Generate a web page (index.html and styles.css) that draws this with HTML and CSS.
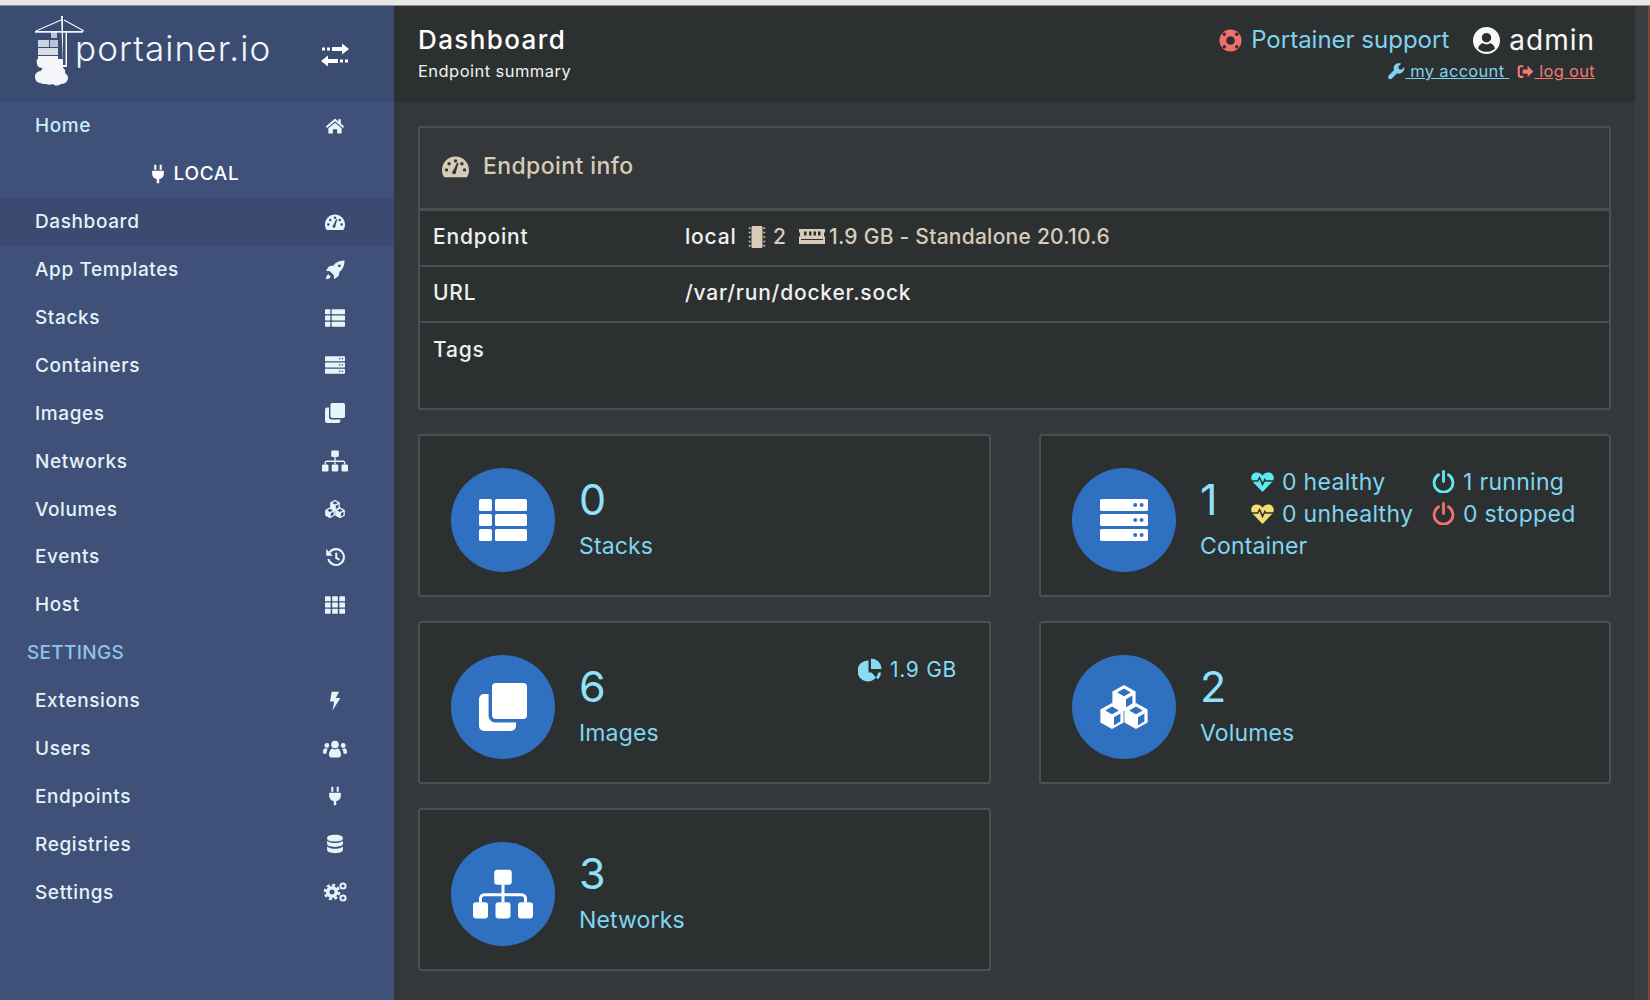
FILE: index.html
```html
<!DOCTYPE html>
<html>

<head>
    <title>Portainer</title>
    <link rel="stylesheet" href="styles.css">
</head>

<body>
    <!-- icon sprite -->
    <svg class="sprite" xmlns="http://www.w3.org/2000/svg">
        <symbol id="i-exchange" viewBox="0 0 28 24"><path d="M1 4.5h3v3H1zM6 4.5h3v3H6zM11 4h10V.5L28 6l-7 5.5V8H11zM27 16.5h-3v3h3zM22 16.5h-3v3h3zM17 16H7v-3.5L0 18l7 5.5V20h10z"/></symbol>
        <symbol id="i-home" viewBox="0 0 24 24"><path d="M12 3L1 12.5l1.5 1.8L12 6.2l9.5 8.1 1.5-1.8L19 9V4h-3v2.5zM12 8l-8 6.7V21h5.5v-5h5v5H20v-6.3z"/></symbol>
        <symbol id="i-plug" viewBox="0 0 24 24"><path d="M7.5 1H10v6H7.5zM14 1h2.5v6H14zM5 8h14v4c0 3-2 5.5-5.5 6v5h-3v-5C7 17.5 5 15 5 12z"/></symbol>
        <symbol id="i-gauge" viewBox="0 0 24 24"><path fill-rule="evenodd" d="M12 3C5.4 3 0 8.4 0 15c0 2.3.6 4.3 1.7 6 .2.3.5.5.9.5h18.8c.4 0 .7-.2.9-.5 1.1-1.7 1.7-3.7 1.7-6 0-6.6-5.4-12-12-12zM2.5 15a1.5 1.5 0 1 0 3 0 1.5 1.5 0 1 0-3 0zM4.8 9.5a1.5 1.5 0 1 0 3 0 1.5 1.5 0 1 0-3 0zM10.5 7a1.5 1.5 0 1 0 3 0 1.5 1.5 0 1 0-3 0zM18.5 15a1.5 1.5 0 1 0 3 0 1.5 1.5 0 1 0-3 0zM16.2 9.5a1.5 1.5 0 1 0 3 0 1.5 1.5 0 1 0-3 0zM10 15.5l3.5-7 1.2.5-2.2 7.5a1.8 1.8 0 1 1-2.5-1z"/></symbol>
        <symbol id="i-rocket" viewBox="0 0 24 24"><path fill-rule="evenodd" d="M23.5.5c-6 0-10.500 2-13.500 6L5 7.500 1 13l5 .5 4.500 4.500.5 5 5.500-4 1-5c4-3 6-7.500 6-13.500zM15.500 7a1.700 1.700 0 1 0 3.400 0 1.700 1.700 0 1 0-3.400 0z"/><path d="M4 17c-2 1-3 4-3 6 2 0 5-1 6-3z"/></symbol>
        <symbol id="i-list" viewBox="0 0 24 21"><rect x="0" y="0" width="6.500" height="6" rx=".8"/><rect x="8" y="0" width="16" height="6" rx=".8"/><rect x="0" y="7.500" width="6.500" height="6" rx=".8"/><rect x="8" y="7.500" width="16" height="6" rx=".8"/><rect x="0" y="15" width="6.500" height="6" rx=".8"/><rect x="8" y="15" width="16" height="6" rx=".8"/></symbol>
        <symbol id="i-server" viewBox="0 0 24 21"><path fill-rule="evenodd" d="M.8 0h22.400c.4 0 .8.4.8.8v4.400c0 .4-.4.8-.8.8H.8C.4 6 0 5.600 0 5.200V.8C0 .4.4 0 .8 0zM16.600 3a1 1 0 1 0 2 0 1 1 0 1 0-2 0zM19.800 3a1 1 0 1 0 2 0 1 1 0 1 0-2 0zM.8 7.500h22.400c.4 0 .8.4.8.8v4.400c0 .4-.4.8-.8.8H.8c-.4 0-.8-.4-.8-.8V8.300c0-.4.4-.8.8-.8zM16.600 10.500a1 1 0 1 0 2 0 1 1 0 1 0-2 0zM19.800 10.500a1 1 0 1 0 2 0 1 1 0 1 0-2 0zM.8 15h22.400c.4 0 .8.4.8.8v4.400c0 .4-.4.8-.8.8H.8c-.4 0-.8-.4-.8-.8v-4.400c0-.4.4-.8.8-.8zM16.600 18a1 1 0 1 0 2 0 1 1 0 1 0-2 0zM19.800 18a1 1 0 1 0 2 0 1 1 0 1 0-2 0z"/></symbol>
        <symbol id="i-clone" viewBox="0 0 24 24"><rect x="6.500" y="0" width="17.500" height="18" rx="2"/><path d="M4.800 5.500H2.500A2.500 2.500 0 0 0 0 8v13.500A2.500 2.500 0 0 0 2.500 24H16a2.500 2.500 0 0 0 2.500-2.500v-1.800H8a3.200 3.200 0 0 1-3.200-3.200z"/></symbol>
        <symbol id="i-sitemap" viewBox="0 0 24 19.500"><rect x="8.500" y="0" width="7" height="6" rx="1.200"/><rect x="0" y="13" width="6" height="6.500" rx="1.200"/><rect x="9" y="13" width="6" height="6.500" rx="1.200"/><rect x="18" y="13" width="6" height="6.500" rx="1.200"/><path d="M12 6v7M3 13v-1.500A1.500 1.500 0 0 1 4.500 10h15a1.500 1.500 0 0 1 1.500 1.500V13" fill="none" stroke="currentColor" stroke-width="1.200"/></symbol>
        <symbol id="i-cubes" viewBox="0 0 24 22"><path fill-rule="evenodd" d="M12 0l5.800 3.200v6.600L12 13 6.200 9.800V3.200zM12 1.800L8.600 3.700 12 5.600l3.400-1.900zM13 7.100v4l3.200-1.800v-4z"/><path fill-rule="evenodd" d="M6 9l5.800 3.200v6.600L6 22 .2 18.800v-6.600zM6 10.800l-3.400 1.900L6 14.600l3.400-1.900zM7 16.100v4l3.200-1.800v-4z"/><path fill-rule="evenodd" d="M18 9l5.800 3.200v6.600L18 22l-5.800-3.200v-6.600zM18 10.800l-3.400 1.900 3.400 1.900 3.400-1.900zM19 16.100v4l3.200-1.800v-4z"/></symbol>
        <symbol id="i-history" viewBox="0 0 24 24"><path d="M5.500 6.500A9.500 9.500 0 1 1 4 14.500M13.500 7v6l4 2.500" fill="none" stroke="currentColor" stroke-width="2.500"/><path d="M1.500 2.500v8h8z"/></symbol>
        <symbol id="i-grid" viewBox="0 0 24 21"><rect x="0" y="0" width="6.800" height="6" rx=".6"/><rect x="8.600" y="0" width="6.800" height="6" rx=".6"/><rect x="17.200" y="0" width="6.800" height="6" rx=".6"/><rect x="0" y="7.500" width="6.800" height="6" rx=".6"/><rect x="8.600" y="7.500" width="6.800" height="6" rx=".6"/><rect x="17.200" y="7.500" width="6.800" height="6" rx=".6"/><rect x="0" y="15" width="6.800" height="6" rx=".6"/><rect x="8.600" y="15" width="6.800" height="6" rx=".6"/><rect x="17.200" y="15" width="6.800" height="6" rx=".6"/></symbol>
        <symbol id="i-bolt" viewBox="0 0 24 24"><path d="M8 1h9l-4 7.500h5.500L9 23.500l2-11H6z"/></symbol>
        <symbol id="i-users" viewBox="0 0 24 24"><circle cx="12" cy="7.500" r="3.800"/><path d="M6 18c0-4 2-6.500 3.500-6.500 1 .6 1.700.9 2.500.9s1.500-.3 2.500-.9C16 11.500 18 14 18 18c0 1.300-1 2.500-2.500 2.500h-7C7 20.500 6 19.300 6 18z"/><circle cx="3.800" cy="8.500" r="2.400"/><circle cx="20.200" cy="8.500" r="2.400"/><path d="M0 15c0-2.500 1-3.800 2.500-3.800.6.500 1.600.8 2.400.6-.8 1.200-1.400 3-1.500 5H1c-.6 0-1-.5-1-1.800zM24 15c0-2.500-1-3.800-2.500-3.800-.6.500-1.600.8-2.400.6.800 1.200 1.400 3 1.500 5H23c.6 0 1-.5 1-1.800z"/></symbol>
        <symbol id="i-database" viewBox="0 0 24 24"><path d="M12 1C6 1 2.500 2.500 2.500 5S6 9 12 9s9.500-1.500 9.500-4S18 1 12 1zM2.500 8v3.500c0 2.500 3.500 4 9.500 4s9.500-1.500 9.500-4V8c-2 2-6 2.800-9.500 2.800S4.500 10 2.500 8zM2.500 15v4c0 2.500 3.500 4 9.500 4s9.500-1.500 9.500-4v-4c-2 2-6 2.800-9.500 2.800S4.500 17 2.500 15z"/></symbol>
        <symbol id="i-cogs" viewBox="0 0 24 24"><circle cx="9" cy="12" r="7" fill="none" stroke="currentColor" stroke-width="2.600" stroke-dasharray="3 2.500"/><circle cx="9" cy="12" r="4.300" fill="none" stroke="currentColor" stroke-width="3.600"/><circle cx="20" cy="6" r="2.600" fill="none" stroke="currentColor" stroke-width="2"/><circle cx="20" cy="18" r="2.600" fill="none" stroke="currentColor" stroke-width="2"/></symbol>
        <symbol id="i-lifering" viewBox="0 0 24 24"><circle cx="12" cy="12" r="11.500" class="ring-a"/><circle cx="12" cy="12" r="4.500" class="ring-b"/><circle cx="5.500" cy="5.500" r="1.800" class="ring-b"/><circle cx="18.500" cy="5.500" r="1.800" class="ring-b"/><circle cx="5.500" cy="18.500" r="1.800" class="ring-b"/><circle cx="18.500" cy="18.500" r="1.800" class="ring-b"/></symbol>
        <symbol id="i-user" viewBox="0 0 24 24"><path fill-rule="evenodd" d="M12 0a12 12 0 1 0 0 24 12 12 0 1 0 0-24zM7.800 9.500a4.200 4.200 0 1 0 8.400 0 4.200 4.200 0 1 0-8.400 0zM4.500 19c1-3.500 3.500-4.500 4.500-4.500.8.600 1.800 1 3 1s2.200-.4 3-1c1 0 3.500 1 4.500 4.500-2 2-4.500 3-7.500 3s-5.500-1-7.500-3z"/></symbol>
        <symbol id="i-wrench" viewBox="0 0 24 24"><path d="M23 5.500l-4 4-3.500-1-1-3.500 4-4C15.500 0 12 .5 10 2.500c-2 2-2.500 5-1.500 7.500L1 17.500c-1.200 1.200-1.200 3.200 0 4.500s3.300 1.200 4.500 0L13 14.500c2.500 1 5.500.5 7.500-1.500 2-2 3-4.500 2.500-7.500z"/></symbol>
        <symbol id="i-signout" viewBox="0 0 24 24"><path d="M9 3H5a4 4 0 0 0-4 4v10a4 4 0 0 0 4 4h4v-3H5a1 1 0 0 1-1-1V7a1 1 0 0 1 1-1h4zM8 9h7V4l8 8-8 8v-5H8z"/></symbol>
        <symbol id="i-heart" viewBox="0 0 24 24"><path d="M12 23L2 12.500C-1.500 8.500.5 2.500 6 2.500c3 0 5 1.500 6 3.500 1-2 3-3.500 6-3.500 5.500 0 7.500 6 4 10z"/><path d="M0 11.500h7l2-3.500 3 7 2.500-5 1 1.500H24" class="pulse"/></symbol>
        <symbol id="i-power" viewBox="0 0 24 24"><path d="M6.800 5A9.800 9.800 0 1 0 17.200 5M12 1.500v10.500" fill="none" stroke="currentColor" stroke-width="3" stroke-linecap="round"/></symbol>
        <symbol id="i-pie" viewBox="0 0 24 24"><path d="M10.500 2.500a10.500 10.500 0 1 0 9.800 12H10.500zM13 .5A10.500 10.500 0 0 1 23.500 11H13zM13.500 14.500h9.500a10.500 10.500 0 0 1-3 7z"/></symbol>
        <symbol id="i-chip" viewBox="0 0 24 24"><rect x="6" y="0" width="12" height="24" rx="1.500"/><path d="M3 2.500h2M3 7h2M3 12h2M3 17h2M3 21.500h2M19 2.500h2M19 7h2M19 12h2M19 17h2M19 21.500h2" stroke="currentColor" stroke-width="1.600" fill="none"/></symbol>
        <symbol id="i-memory" viewBox="0 0 26 15"><path fill-rule="evenodd" d="M0 0h26v3.500h-1v4h1V15H0V7.500h1v-4H0zM5 2.500h2.500v4H5zM10 2.500h2.500v4H10zM14.500 2.500H17v4h-2.500zM19 2.500h2.500v4H19zM2 10v1h22v-1z"/></symbol>
    </svg>

    <div class="browser-bar"></div>

    <div class="window">
        <aside class="sidebar">
            <div class="brand">
                <div class="logo">
                    <svg class="crane" viewBox="0 0 54 70" xmlns="http://www.w3.org/2000/svg">
                        <path d="M1 15h48v1.800H1z"/>
                        <path d="M27 0h2v51h4V15h-1.500v34H29z"/>
                        <path d="M2 15L27 4M50 15L30 4" class="crane-line"/>
                        <rect x="4" y="24" width="11" height="7" opacity=".8"/>
                        <rect x="16" y="24" width="8" height="7" opacity=".7"/>
                        <rect x="4" y="32" width="20" height="7" opacity=".85"/>
                        <rect x="4" y="40" width="20" height="6"/>
                        <rect x="17" y="16" width="6" height="6" opacity=".7"/>
                        <path d="M3 43h26v9H8c-4 0-6-3-5-9z"/>
                        <path d="M12 68c-6 0-11-2-11-7 0-4 3-6 6-6 1-4 6-6 10-4 2-2 7-3 10 0 3 1 5 3 4 6 3 2 4 5 2 8-1 2-3 3-6 3-3 2-6 2-8 0-2 1-5 1-7 0z"/>
                    </svg>
                    <span class="logo-text">portainer.io</span>
                </div>
                <svg class="icon-toggle"><use href="#i-exchange"/></svg>
            </div>
            <nav class="nav">
                <a class="nav-row home">Home <svg class="icon"><use href="#i-home"/></svg></a>
                <div class="nav-endpoint"><svg class="icon"><use href="#i-plug"/></svg> LOCAL</div>
                <a class="nav-row active">Dashboard <svg class="icon"><use href="#i-gauge"/></svg></a>
                <a class="nav-row">App Templates <svg class="icon"><use href="#i-rocket"/></svg></a>
                <a class="nav-row">Stacks <svg class="icon"><use href="#i-list"/></svg></a>
                <a class="nav-row">Containers <svg class="icon"><use href="#i-server"/></svg></a>
                <a class="nav-row">Images <svg class="icon"><use href="#i-clone"/></svg></a>
                <a class="nav-row">Networks <svg class="icon wide"><use href="#i-sitemap"/></svg></a>
                <a class="nav-row">Volumes <svg class="icon"><use href="#i-cubes"/></svg></a>
                <a class="nav-row">Events <svg class="icon"><use href="#i-history"/></svg></a>
                <a class="nav-row">Host <svg class="icon"><use href="#i-grid"/></svg></a>
                <div class="nav-title">SETTINGS</div>
                <a class="nav-row">Extensions <svg class="icon"><use href="#i-bolt"/></svg></a>
                <a class="nav-row">Users <svg class="icon wide"><use href="#i-users"/></svg></a>
                <a class="nav-row">Endpoints <svg class="icon"><use href="#i-plug"/></svg></a>
                <a class="nav-row">Registries <svg class="icon"><use href="#i-database"/></svg></a>
                <a class="nav-row">Settings <svg class="icon wide"><use href="#i-cogs"/></svg></a>
            </nav>
        </aside>

        <div class="main">
            <header class="topbar">
                <div>
                    <div class="page-title">Dashboard</div>
                    <div class="page-sub">Endpoint summary</div>
                </div>
                <div class="account">
                    <div class="account-top">
                        <a class="support"><svg class="icon-support"><use href="#i-lifering"/></svg>Portainer support</a>
                        <span class="username"><svg class="icon-user"><use href="#i-user"/></svg>admin</span>
                    </div>
                    <div class="account-links">
                        <a class="link-blue"><svg class="icon-small"><use href="#i-wrench"/></svg><u>&nbsp;my account&nbsp;</u></a>
                        <a class="link-red"><svg class="icon-small"><use href="#i-signout"/></svg><u>&nbsp;log out</u></a>
                    </div>
                </div>
            </header>

            <div class="content">
                <section class="panel">
                    <div class="panel-head"><svg class="icon-head"><use href="#i-gauge"/></svg>Endpoint info</div>
                    <div class="info-row">
                        <span class="info-key">Endpoint</span>
                        <span class="info-val">local <span class="beige"><svg class="icon-chip"><use href="#i-chip"/></svg>2 <svg class="icon-memory"><use href="#i-memory"/></svg>1.9 GB - Standalone 20.10.6</span></span>
                    </div>
                    <div class="info-row">
                        <span class="info-key">URL</span>
                        <span class="info-val">/var/run/docker.sock</span>
                    </div>
                    <div class="info-row tags">
                        <span class="info-key">Tags</span>
                    </div>
                </section>

                <div class="cards">
                    <div class="card">
                        <div class="badge"><svg class="badge-icon"><use href="#i-list"/></svg></div>
                        <div class="card-text">
                            <div class="num">0</div>
                            <div class="label">Stacks</div>
                        </div>
                    </div>
                    <div class="card">
                        <div class="badge"><svg class="badge-icon"><use href="#i-server"/></svg></div>
                        <div class="card-text with-stats">
                            <div class="num">1</div>
                            <div class="stats">
                                <span><svg class="stat-icon heart-ok"><use href="#i-heart"/></svg>0 healthy</span>
                                <span><svg class="stat-icon power-on"><use href="#i-power"/></svg>1 running</span>
                                <span><svg class="stat-icon heart-bad"><use href="#i-heart"/></svg>0 unhealthy</span>
                                <span><svg class="stat-icon power-off"><use href="#i-power"/></svg>0 stopped</span>
                            </div>
                            <div class="label">Container</div>
                        </div>
                    </div>
                    <div class="card">
                        <div class="badge"><svg class="badge-icon"><use href="#i-clone"/></svg></div>
                        <div class="card-text">
                            <div class="num">6</div>
                            <div class="label">Images</div>
                        </div>
                        <div class="disk"><svg class="disk-icon"><use href="#i-pie"/></svg>1.9 GB</div>
                    </div>
                    <div class="card">
                        <div class="badge"><svg class="badge-icon"><use href="#i-cubes"/></svg></div>
                        <div class="card-text">
                            <div class="num">2</div>
                            <div class="label">Volumes</div>
                        </div>
                    </div>
                    <div class="card">
                        <div class="badge"><svg class="badge-icon big"><use href="#i-sitemap"/></svg></div>
                        <div class="card-text">
                            <div class="num">3</div>
                            <div class="label">Networks</div>
                        </div>
                    </div>
                </div>
            </div>
        </div>

        <div class="scroll-strip"></div>
    </div>
</body>

</html>
```

FILE: styles.css
```css
* {
    box-sizing: border-box;
}

html,
body {
    margin: 0;
    height: 100%;
    overflow: hidden;
}

body {
    font-family: "Inter", "Liberation Sans", sans-serif;
    background-color: #34383b;
    color: #fff;
}

.sprite {
    display: none;
}

svg {
    fill: currentColor;
    flex: none;
}

.browser-bar {
    height: 6px;
    background-color: #e8e8e6;
    border-bottom: 1px solid #8f8f8c;
}

.window {
    display: flex;
    height: 994px;
}

/* sidebar */
.sidebar {
    width: 394px;
    flex: none;
    background-color: #3f5079;
}

.brand {
    height: 96px;
    background-color: #3b4c72;
    display: flex;
    align-items: flex-start;
    justify-content: space-between;
    padding: 10px 45px 0 34px;
}

.logo {
    display: flex;
    align-items: flex-start;
}

.crane {
    width: 54px;
    height: 70px;
    color: #f4f6fa;
}

.crane-line {
    fill: none;
    stroke: currentColor;
    stroke-width: 1.2;
}

.logo-text {
    font-size: 35px;
    font-weight: 300;
    line-height: 40px;
    margin: 12px 0 0 -13px;
    color: #f4f6fa;
    letter-spacing: 1.1px;
}

.icon-toggle {
    width: 28px;
    height: 24px;
    margin-top: 27px;
    color: #fff;
}

.nav {
    display: block;
}

.nav-row {
    height: 47.9px;
    display: flex;
    align-items: center;
    justify-content: space-between;
    padding: 0 46px 0 35px;
    font-size: 19px;
    font-weight: 500;
    letter-spacing: .6px;
    color: #e3f3f7;
}

.nav-row.home {
    color: #c8eef7;
}

.nav-row.active {
    background-color: #3a4a70;
}

.icon {
    width: 20px;
    height: 20px;
    margin: 0 3px;
    color: #e3f6fa;
}

.icon.wide {
    width: 26px;
    height: 24px;
    margin: 0;
}

.nav-endpoint {
    height: 47.9px;
    display: flex;
    align-items: center;
    justify-content: center;
    padding-right: 6px;
    font-size: 19px;
    font-weight: 500;
    letter-spacing: .7px;
    color: #fff;
}

.nav-endpoint .icon {
    color: #fff;
    margin: 0 5px 0 0;
}

.nav-title {
    height: 47.9px;
    line-height: 47.9px;
    padding-left: 27px;
    font-size: 19px;
    font-weight: 500;
    letter-spacing: .3px;
    color: #8fc3ee;
}

/* top bar */
.main {
    width: 1241px;
    flex: none;
}

.topbar {
    height: 96px;
    background-color: #2d3031;
    display: flex;
    justify-content: space-between;
    padding: 0 40px 0 24px;
}

.page-title {
    font-size: 26px;
    line-height: 32px;
    font-weight: 500;
    letter-spacing: 1.4px;
    margin-top: 18px;
}

.page-sub {
    font-size: 16.500px;
    line-height: 22px;
    letter-spacing: .45px;
    margin-top: 4px;
    color: #f0f0f0;
}

.account {
    display: flex;
    flex-direction: column;
    align-items: flex-end;
}

.account-top {
    display: flex;
    align-items: center;
    margin-top: 18px;
    font-size: 24px;
    line-height: 32px;
}

.support {
    display: flex;
    align-items: center;
    color: #7fd3ee;
}

.icon-support {
    width: 23px;
    height: 23px;
    margin-right: 9px;
}

.ring-a {
    fill: #f26f6b;
}

.ring-b {
    fill: #2d3031;
}

.username {
    display: flex;
    align-items: center;
    margin-left: 24px;
    font-size: 28px;
    letter-spacing: 1px;
    color: #f8f8f8;
}

.icon-user {
    width: 27px;
    height: 27px;
    margin-right: 9px;
}

.account-links {
    font-size: 16.500px;
    line-height: 22px;
    letter-spacing: .3px;
    margin-top: 4px;
}

.link-blue {
    color: #7fd3ee;
}

.link-red {
    color: #f07a75;
    margin-left: 3px;
}

.icon-small {
    width: 17px;
    height: 17px;
    vertical-align: -3px;
}

/* endpoint info */
.content {
    padding: 24px 24px 0 24px;
}

.panel {
    border: 2px solid #4b5053;
    border-radius: 2px;
    height: 284px;
    font-size: 21px;
}

.panel-head {
    height: 83px;
    display: flex;
    align-items: center;
    padding: 0 0 4px 22px;
    font-size: 23px;
    font-weight: 500;
    letter-spacing: .4px;
    color: #d8cbb8;
    border-bottom: 3px solid #4b5053;
}

.icon-head {
    width: 27px;
    height: 27px;
    margin-right: 14px;
}

.info-row {
    height: 56px;
    display: flex;
    align-items: center;
    padding: 0 0 3px 13px;
    background-color: #2d3031;
    border-bottom: 2px solid #4b5053;
    font-weight: 500;
    letter-spacing: .8px;
    color: #f0f0ee;
}

.info-row.tags {
    height: 85px;
    align-items: flex-start;
    padding-top: 14px;
    border-bottom: 0;
}

.info-key {
    width: 252px;
}

.beige {
    color: #d8cbb8;
    letter-spacing: .25px;
}

.icon-chip {
    width: 24px;
    height: 22px;
    margin: 0 4px 0 2px;
    vertical-align: -4px;
}

.icon-memory {
    width: 26px;
    height: 15px;
    margin: 0 4px 0 7px;
    vertical-align: 0;
}

/* cards */
.cards {
    display: grid;
    grid-template-columns: 573px 572px;
    justify-content: space-between;
    grid-auto-rows: 163px;
    row-gap: 24px;
    margin-top: 24px;
}

.card {
    display: flex;
    align-items: center;
    background-color: #2d3031;
    border: 2px solid #4b5053;
    border-radius: 3px;
    padding: 8px 32px 0 31px;
}

.badge {
    width: 104px;
    height: 104px;
    border-radius: 50%;
    background-color: #3070c0;
    flex: none;
    display: flex;
    align-items: center;
    justify-content: center;
    margin-right: 24px;
    color: #fff;
}

.badge-icon {
    width: 48px;
    height: 48px;
}

.badge-icon.big {
    width: 60px;
    height: 60px;
}

.card-text {
    color: #86dcf5;
    margin-bottom: 4px;
}

.num {
    font-size: 43px;
    line-height: 48px;
    color: #8ee3fb;
}

.label {
    font-size: 23px;
    line-height: 30px;
    letter-spacing: .15px;
    margin-top: 8px;
    color: #7fd6ef;
}

.with-stats {
    display: grid;
    grid-template-columns: 51px auto;
    flex: 1;
}

.with-stats .label {
    grid-column: 1 / -1;
}

.stats {
    display: grid;
    grid-template-columns: 181px auto;
    margin: -9px 0 -7px;
    font-size: 23px;
    line-height: 32px;
    letter-spacing: .3px;
    color: #7fd6ef;
    white-space: nowrap;
}

.stats span {
    display: flex;
    align-items: center;
}

.stat-icon {
    width: 23px;
    height: 23px;
    margin-right: 8px;
}

.pulse {
    fill: none;
    stroke: #2d3031;
    stroke-width: 1.600;
}

.heart-ok,
.power-on {
    color: #5de9f0;
}

.heart-bad {
    color: #f5e06e;
}

.power-off {
    color: #f26f6b;
}

.disk {
    display: flex;
    align-items: center;
    align-self: flex-start;
    margin: 25px 0 0 auto;
    font-size: 21px;
    line-height: 28px;
    letter-spacing: .7px;
    color: #86dcf5;
}

.disk-icon {
    width: 24px;
    height: 24px;
    margin-right: 8px;
}

.scroll-strip {
    flex: 1;
    background-color: #3a3d40;
    border-right: 2px solid #7a4a2c;
}
```
